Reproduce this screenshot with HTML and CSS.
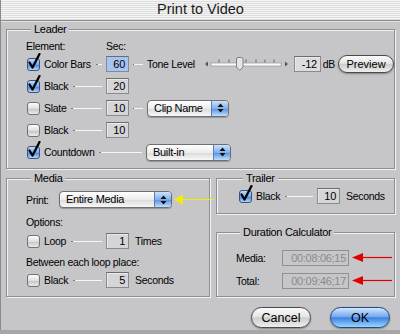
FILE: index.html
```html
<!doctype html>
<html>
<head>
    <title>Print to Video</title>
    <meta charset="utf-8">
    <link rel="stylesheet" href="styles.css">
</head><body>
<div class="window">
    <div class="titlebar">Print to Video</div>
    <div class="content">

        <fieldset class="group leader">
            <legend>Leader</legend>
            <div class="head"><span class="head-elem">Element:</span><span>Sec:</span></div>

            <div class="row">
                <div class="elem"><span class="cb on"><svg width="16" height="18" viewBox="0 0 16 18"><path d="M2.5 9.5 L5.5 14.5 L12.5 1" /></svg></span><span class="lbl">Color Bars</span><span class="wire"></span></div>
                <span class="field sel">60</span>
                <span class="wire gap"></span>
                <span class="lbl">Tone Level</span>
                <svg class="slider" width="86" height="16" viewBox="0 0 86 16">
                    <path d="M2 8 L5 5.5 L5 10.5 Z" fill="#555"/>
                    <path d="M85 8 L82 5.5 L82 10.5 Z" fill="#555"/>
                    <rect x="8" y="7" width="70" height="3" fill="#fafafa" stroke="#8a8a8a" stroke-width="0.6"/>
                    <path d="M16 3.5v3M26 3.5v3M43 3.5v3M53 3.5v3M62 3.5v3M71 3.5v3" stroke="#666" stroke-width="1"/>
                    <path d="M33.5 3 Q33.5 1.5 35 1.5 H38.5 Q40 1.5 40 3 V11 L36.75 14.5 L33.5 11 Z" fill="#e4e4e4" stroke="#6a6a6a" stroke-width="0.8"/>
                </svg>
                <span class="field db">-12</span>
                <span class="lbl unit">dB</span>
                <button class="btn preview">Preview</button>
            </div>

            <div class="row">
                <div class="elem"><span class="cb on"><svg width="16" height="18" viewBox="0 0 16 18"><path d="M2.5 9.5 L5.5 14.5 L12.5 1" /></svg></span><span class="lbl">Black</span><span class="wire"></span></div>
                <span class="field">20</span>
            </div>

            <div class="row">
                <div class="elem"><span class="cb"></span><span class="lbl">Slate</span><span class="wire"></span></div>
                <span class="field">10</span>
                <span class="wire gap"></span>
                <div class="popup clip"><span class="popup-text">Clip Name</span><span class="popup-arrows"><svg width="7" height="10" viewBox="0 0 7 10"><path d="M3.5 0.5 L6.5 4 H0.5 Z M3.5 9.5 L6.5 6 H0.5 Z" fill="#111"/></svg></span></div>
            </div>

            <div class="row">
                <div class="elem"><span class="cb"></span><span class="lbl">Black</span><span class="wire"></span></div>
                <span class="field">10</span>
            </div>

            <div class="row">
                <div class="elem wide"><span class="cb on"><svg width="16" height="18" viewBox="0 0 16 18"><path d="M2.5 9.5 L5.5 14.5 L12.5 1" /></svg></span><span class="lbl">Countdown</span><span class="wire"></span></div>
                <div class="popup countdown"><span class="popup-text">Built-in</span><span class="popup-arrows"><svg width="7" height="10" viewBox="0 0 7 10"><path d="M3.5 0.5 L6.5 4 H0.5 Z M3.5 9.5 L6.5 6 H0.5 Z" fill="#111"/></svg></span></div>
            </div>
        </fieldset>

        <div class="lower">
            <fieldset class="group media">
                <legend>Media</legend>
                <div class="print-row">
                    <span class="lbl print-lbl">Print:</span>
                    <div class="popup entire"><span class="popup-text">Entire Media</span><span class="popup-arrows"><svg width="7" height="10" viewBox="0 0 7 10"><path d="M3.5 0.5 L6.5 4 H0.5 Z M3.5 9.5 L6.5 6 H0.5 Z" fill="#111"/></svg></span></div>
                    <svg class="note-yellow" width="40" height="11" viewBox="0 0 40 11"><path d="M8 5.5 H40" stroke="#f2ee00" stroke-width="1"/><path d="M0 5.5 L9 0.5 L9 10.5 Z" fill="#f2ee00"/></svg>
                </div>
                <div class="caption">Options:</div>
                <div class="row">
                    <div class="elem"><span class="cb"></span><span class="lbl">Loop</span><span class="wire"></span></div>
                    <span class="field">1</span>
                    <span class="lbl after">Times</span>
                </div>
                <div class="caption second">Between each loop place:</div>
                <div class="row">
                    <div class="elem"><span class="cb"></span><span class="lbl">Black</span><span class="wire"></span></div>
                    <span class="field">5</span>
                    <span class="lbl after">Seconds</span>
                </div>
            </fieldset>

            <div class="side">
                <fieldset class="group trailer">
                    <legend>Trailer</legend>
                    <div class="row">
                        <div class="elem"><span class="cb on"><svg width="16" height="18" viewBox="0 0 16 18"><path d="M2.5 9.5 L5.5 14.5 L12.5 1" /></svg></span><span class="lbl">Black</span><span class="wire"></span></div>
                        <span class="field">10</span>
                        <span class="lbl after">Seconds</span>
                    </div>
                </fieldset>

                <fieldset class="group duration">
                    <legend>Duration Calculator</legend>
                    <div class="dur-row">
                        <span class="lbl dur-lbl">Media:</span>
                        <span class="field tc">00:08:06;15</span>
                        <svg class="note-red" width="40" height="9" viewBox="0 0 40 9"><path d="M8 4.5 H40" stroke="#e00000" stroke-width="1.2"/><path d="M0 4.5 L11 0 L11 9 Z" fill="#e00000"/></svg>
                    </div>
                    <div class="dur-row">
                        <span class="lbl dur-lbl">Total:</span>
                        <span class="field tc">00:09:46;17</span>
                        <svg class="note-red" width="40" height="9" viewBox="0 0 40 9"><path d="M8 4.5 H40" stroke="#e00000" stroke-width="1.2"/><path d="M0 4.5 L11 0 L11 9 Z" fill="#e00000"/></svg>
                    </div>
                </fieldset>
            </div>
        </div>

        <div class="buttons">
            <button class="btn big">Cancel</button>
            <button class="btn big ok">OK</button>
        </div>
    </div>
</div>
</body></html>
```

FILE: styles.css
```css
* {
    box-sizing: border-box;
}

html, body {
    margin: 0;
    padding: 0;
}

body {
    background: #a6a6a8;
    font: 10.5px 'Liberation Sans', Arial, sans-serif;
    letter-spacing: -0.3px;
    color: #000;
}

.window {
    width: 400px;
    height: 330px;
    background: #c6c6c9;
    border-left: 1px solid #8a8a8c;
    overflow: hidden;
}

.titlebar {
    height: 21px;
    line-height: 19px;
    text-align: center;
    font-size: 14.5px;
    letter-spacing: 0;
    color: #1a1a1a;
    background: repeating-linear-gradient(#f4f4f4 0 1px, #dedede 1px 2px);
    border-bottom: 1px solid #8c8c8c;
    box-shadow: 0 1px 0 #e2e2e4;
}

.content {
    padding: 2px 5px 0 5px;
}

/* group boxes */

.group {
    margin: 0;
    padding: 0;
    min-width: 0;
    border: 1px solid #8e8e91;
    box-shadow: 1px 1px 0 #f2f2f2, inset 1px 1px 0 #f2f2f2;
}

.group legend {
    margin-left: 4px;
    padding: 0 3px;
    line-height: 13px;
    font-size: 11px;
    background: #c6c6c9;
}

.leader {
    padding: 4px 0 5px 20px;
}

.head {
    display: flex;
    height: 13px;
    line-height: 13px;
    margin-left: -1px;
}

.head-elem {
    width: 80px;
}

.row {
    display: flex;
    align-items: center;
    height: 22px;
}

.elem {
    display: flex;
    align-items: center;
    width: 79px;
    flex: none;
}

.elem.wide {
    width: 119px;
}

.lbl {
    white-space: nowrap;
}

.elem .lbl {
    margin-left: 4px;
}

.wire {
    flex: 1;
    height: 1px;
    margin: 0 4px 0 5px;
    background: #f6f6f6;
    border-left: 2px solid #7a7a7a;
}

.wire.gap {
    flex: none;
    width: 10px;
    margin: 0 4px;
    border-left: 1px solid #7a7a7a;
}

/* checkboxes */

.cb {
    position: relative;
    flex: none;
    width: 13px;
    height: 13px;
    border: 1px solid #727272;
    border-radius: 3px;
    background: linear-gradient(#fdfdfd, #dedede 50%, #c4c4c4 55%, #ececec);
}

.cb.on {
    border-color: #34537f;
    background: linear-gradient(#c4dcfa, #76a6ea 50%, #5087da 55%, #b2d6fd);
}

.cb svg {
    position: absolute;
    left: -1px;
    top: -6px;
    fill: none;
    stroke: #000;
    stroke-width: 2.3;
    stroke-linecap: round;
    stroke-linejoin: round;
}

/* text fields */

.field {
    flex: none;
    width: 23px;
    height: 16px;
    line-height: 14px;
    padding-right: 3px;
    text-align: right;
    font-size: 11px;
    background: #d5d5d8;
    border: 1px solid #8a8a8c;
    border-top-color: #6c6c6e;
    box-shadow: inset 1px 1px 0 #eaeaea;
}

.field.sel {
    background: #a8c2f4;
    box-shadow: none;
}

.field.db {
    width: 27px;
    margin-left: 5px;
    background: #dcdcde;
}

.unit {
    margin-left: 2px;
}

.after {
    margin-left: 6px;
}

.slider {
    flex: none;
    margin-left: 8px;
}

/* popups */

.popup {
    display: flex;
    height: 17px;
    border: 1px solid #6f6f6f;
    border-radius: 4px;
    overflow: hidden;
    background: linear-gradient(#ffffff, #ececec 50%, #dcdcdc 55%, #f8f8f8);
    box-shadow: 0 1px 1px rgba(0, 0, 0, 0.25);
}

.popup-text {
    flex: 1;
    padding-left: 6px;
    line-height: 15px;
    font-size: 11px;
    white-space: nowrap;
}

.popup-arrows {
    display: flex;
    align-items: center;
    justify-content: center;
    width: 17px;
    border-left: 1px solid #5a7fb6;
    background: linear-gradient(#cde2fb, #7fb0ee 50%, #5f95e2 55%, #bce0fe);
}

.clip {
    width: 82px;
}

.countdown {
    width: 85px;
}

.entire {
    width: 113px;
}

/* buttons */

.btn {
    font: 11px 'Liberation Sans', Arial, sans-serif;
    letter-spacing: 0;
    color: #000;
    padding: 0;
    border: 1px solid #4a4a4a;
    background: linear-gradient(#fbfbfb, #e6e6e6 45%, #cdcdcd 52%, #eeeeee);
    box-shadow: 0 1px 2px rgba(0, 0, 0, 0.35);
}

.preview {
    width: 56px;
    height: 18px;
    margin-left: 3px;
    border-radius: 9px;
}

.big {
    width: 60px;
    height: 21px;
    border-radius: 11px;
    font-size: 12.5px;
}

.ok {
    border-color: #26487c;
    background: linear-gradient(#d2e6fc, #75aaf0 45%, #3f82e2 52%, #98d6ff);
}

/* lower half */

.lower {
    display: grid;
    grid-template-columns: 204px 179px;
    gap: 6px;
    margin-top: 3px;
}

.media {
    height: 125px;
    padding: 6px 0 0 20px;
}

.print-row {
    position: relative;
    display: flex;
    align-items: center;
    height: 17px;
    margin-left: -1px;
}

.print-lbl {
    width: 33px;
}

.note-yellow {
    position: absolute;
    left: 148px;
    top: 3px;
}

.caption {
    height: 13px;
    line-height: 13px;
    margin: 8px 0 1px -1px;
}

.caption.second {
    margin: 4px 0 0 -1px;
}

.side {
    display: flex;
    flex-direction: column;
    gap: 12px;
}

.trailer {
    height: 42px;
    padding: 0 0 0 22px;
}

.trailer .elem {
    width: 78px;
}

.duration {
    flex: 1;
    padding: 7px 0 0 19px;
}

.dur-row {
    display: flex;
    align-items: center;
    height: 23px;
}

.dur-lbl {
    width: 46px;
}

.field.tc {
    width: 67px;
    padding-right: 2px;
    color: #8a8a8a;
    background: transparent;
    box-shadow: none;
    border-color: #909092;
}

.note-red {
    margin-left: 3px;
}

.buttons {
    display: flex;
    justify-content: flex-end;
    gap: 19px;
    margin-top: 10px;
    padding-right: 5px;
}
```
